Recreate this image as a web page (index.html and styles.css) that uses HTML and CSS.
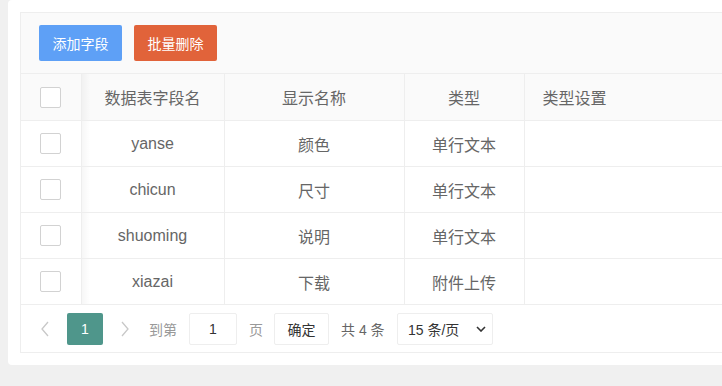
FILE: index.html
```html
<!DOCTYPE html>
<html lang="zh-CN">
<head>
<meta charset="utf-8">
<link rel="stylesheet" href="styles.css">
</head>
<body>
<div class="card">
  <div class="tview">
    <div class="toolbar">
      <button class="btn btn-blue">添加字段</button>
      <button class="btn btn-red">批量删除</button>
    </div>
    <table class="grid">
      <colgroup>
        <col class="c1"><col class="c2"><col class="c3"><col class="c4"><col>
      </colgroup>
      <thead>
        <tr>
          <th class="fixed"><span class="cbox"></span></th>
          <th>数据表字段名</th>
          <th>显示名称</th>
          <th>类型</th>
          <th class="left">类型设置</th>
        </tr>
      </thead>
      <tbody>
        <tr><td class="fixed"><span class="cbox"></span></td><td>yanse</td><td>颜色</td><td>单行文本</td><td></td></tr>
        <tr><td class="fixed"><span class="cbox"></span></td><td>chicun</td><td>尺寸</td><td>单行文本</td><td></td></tr>
        <tr><td class="fixed"><span class="cbox"></span></td><td>shuoming</td><td>说明</td><td>单行文本</td><td></td></tr>
        <tr><td class="fixed"><span class="cbox"></span></td><td>xiazai</td><td>下载</td><td>附件上传</td><td></td></tr>
      </tbody>
    </table>
    <div class="pager">
      <span class="arrow"><svg width="8" height="16" viewBox="0 0 8 16"><polyline points="7,1 1,8 7,15" fill="none" stroke="#c8c8c8" stroke-width="1.3"/></svg></span>
      <span class="curr">1</span>
      <span class="arrow"><svg width="8" height="16" viewBox="0 0 8 16"><polyline points="1,1 7,8 1,15" fill="none" stroke="#c8c8c8" stroke-width="1.3"/></svg></span>
      <span class="lbl skip">到第</span>
      <span class="pinput">1</span>
      <span class="lbl page">页</span>
      <span class="ok">确定</span>
      <span class="count">共 4 条</span>
      <span class="limit">15 条/页<svg class="chev" width="10" height="6" viewBox="0 0 10 6"><polyline points="1,1 5,5 9,1" fill="none" stroke="#333" stroke-width="1.6"/></svg></span>
    </div>
  </div>
</div>
</body>
</html>
```
FILE: styles.css
```css
html, body {
  margin: 0;
  padding: 0;
  overflow: hidden;
}
body {
  background: #f0f0f0;
  height: 386px;
  font-family: "Liberation Sans", "Noto Sans CJK SC", sans-serif;
  color: #666;
}
.card {
  margin-left: 8px;
  width: 900px;
  padding: 12px;
  background: #fff;
  border-radius: 4px;
}
.tview {
  border: 1px solid #eee;
}
.toolbar {
  display: flex;
  gap: 12px;
  padding: 12px 18px;
  background: #fafafa;
  border-bottom: 1px solid #eee;
}
.btn {
  height: 36px;
  width: 83px;
  padding: 0;
  border: none;
  border-radius: 2px;
  color: #fff;
  font-size: 14px;
  font-family: "Noto Sans CJK SC", sans-serif;
}
.btn-blue { background: #5ea0f6; }
.btn-red { background: #e1633a; }
.grid {
  width: 100%;
  border-collapse: collapse;
  border-style: hidden;
  table-layout: fixed;
}
.c1 { width: 60px; }
.c2 { width: 143px; }
.c3 { width: 180px; }
.c4 { width: 120px; }
.grid th, .grid td {
  border: 1px solid #eee;
  padding: 0;
  text-align: center;
  font-size: 16px;
  font-weight: normal;
  color: #666;
}
.grid th {
  height: 46px;
  background: #fafafa;
}
.grid td {
  height: 45px;
  background: #fff;
}
.grid th.left {
  text-align: left;
  padding-left: 18px;
}
.fixed {
  position: relative;
}
.fixed::after {
  content: "";
  position: absolute;
  top: 0;
  bottom: 0;
  right: -9px;
  width: 8px;
  background: linear-gradient(to right, rgba(0,0,0,0.035), rgba(0,0,0,0));
}
.cbox {
  display: inline-block;
  width: 19px;
  height: 19px;
  border: 1px solid #d2d2d2;
  border-radius: 2px;
  background: #fff;
  vertical-align: middle;
}
.pager {
  display: flex;
  align-items: center;
  height: 47px;
  border-top: 1px solid #eee;
  padding-left: 6px;
  font-size: 14px;
}
.arrow {
  width: 36px;
  height: 32px;
  display: flex;
  align-items: center;
  justify-content: center;
}
.curr {
  width: 36px;
  height: 32px;
  margin: 0 4px;
  background: #4f968b;
  color: #fff;
  border-radius: 2px;
  display: flex;
  align-items: center;
  justify-content: center;
}
.lbl { color: #999; }
.skip { margin-left: 6px; }
.pinput, .ok, .limit {
  height: 30px;
  border: 1px solid #eee;
  border-radius: 2px;
  display: flex;
  align-items: center;
  color: #333;
}
.pinput {
  width: 46px;
  margin-left: 12px;
  justify-content: center;
}
.page { margin-left: 12px; }
.ok {
  width: 53px;
  margin-left: 11px;
  justify-content: center;
}
.count {
  margin-left: 12px;
  width: 46px;
  color: #666;
  white-space: nowrap;
}
.limit {
  width: 84px;
  margin-left: 10px;
  padding-left: 10px;
  position: relative;
}
.chev {
  margin-left: auto;
  margin-right: 6px;
}
```
